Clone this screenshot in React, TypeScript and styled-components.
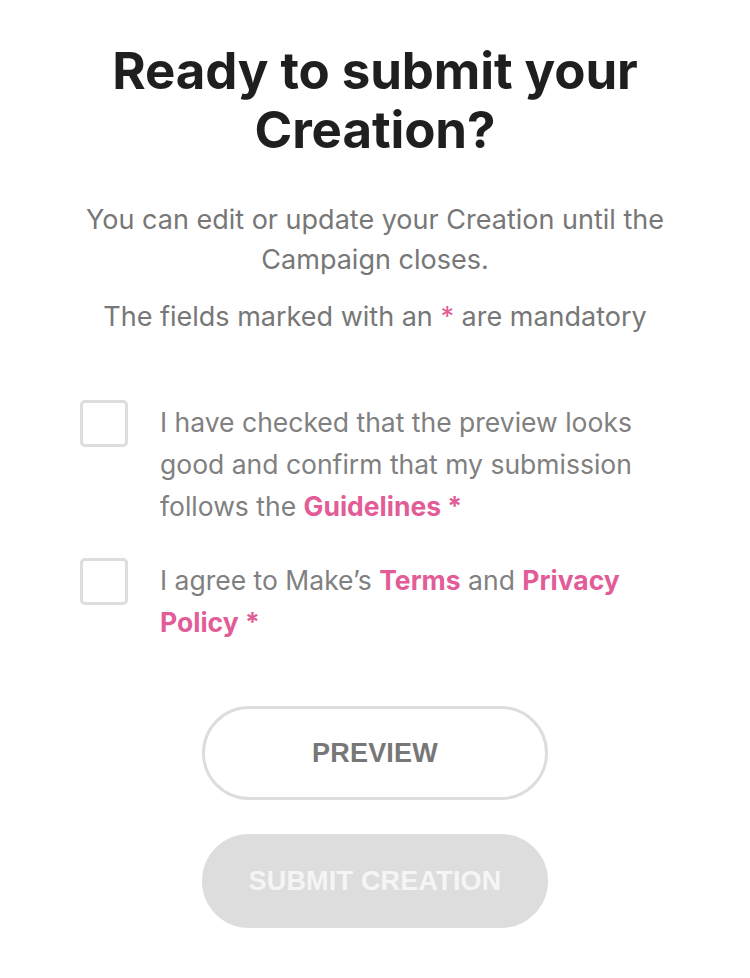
import styled, { createGlobalStyle } from "styled-components";

const GlobalStyle = createGlobalStyle`
  html, body {
    margin: 0;
    padding: 0;
    background: #ffffff;
  }
  body {
    font-family: Inter, "Noto Sans", "Liberation Sans", sans-serif;
    -webkit-font-smoothing: antialiased;
  }
`;

const Page = styled.main`
  width: 750px;
  display: flex;
  flex-direction: column;
  align-items: center;
  padding: 41px 0 40px;
  box-sizing: border-box;
`;

const Title = styled.h1`
  margin: 0;
  width: 620px;
  text-align: center;
  font-size: 51px;
  line-height: 59px;
  font-weight: 700;
  color: #1f1f1f;
  letter-spacing: -0.1px;
`;

const Lead = styled.p`
  margin: 41px 0 0;
  width: 640px;
  text-align: center;
  font-size: 27px;
  line-height: 40px;
  color: #777777;
`;

const Note = styled(Lead)`
  margin-top: 17px;
`;

const Pink = styled.span<{ $bold?: boolean }>`
  color: #e25d98;
  font-weight: ${(p) => (p.$bold ? 700 : 400)};
`;

const Checks = styled.div`
  width: 590px;
  margin-top: 63px;
  display: flex;
  flex-direction: column;
  gap: 31px;
`;

const CheckRow = styled.label`
  display: flex;
  align-items: flex-start;
  gap: 32px;
  cursor: pointer;
`;

const Box = styled.span`
  flex: none;
  width: 48px;
  height: 47px;
  box-sizing: border-box;
  border: 3px solid #dddddd;
  border-radius: 5px;
`;

const CheckText = styled.span`
  font-size: 26.5px;
  line-height: 42px;
  color: #808080;
  margin-top: 1px;
`;

const Buttons = styled.div`
  margin-top: 63px;
  display: flex;
  flex-direction: column;
  gap: 34px;
`;

const Button = styled.button<{ $filled?: boolean }>`
  width: 346px;
  height: 94px;
  box-sizing: border-box;
  border-radius: 47px;
  border: 3px solid #dddddd;
  background: ${(p) => (p.$filled ? "#dddddd" : "#ffffff")};
  color: ${(p) => (p.$filled ? "#f5f5f5" : "#777777")};
  font-family: "Liberation Sans", Arial, sans-serif;
  font-weight: 700;
  font-size: 27px;
  letter-spacing: 0.2px;
  text-transform: uppercase;
  cursor: pointer;
`;

export default function App() {
  return (
    <>
      <GlobalStyle />
      <Page>
        <Title>Ready to submit your Creation?</Title>
        <Lead>You can edit or update your Creation until the Campaign closes.</Lead>
        <Note>
          The fields marked with an <Pink>*</Pink> are mandatory
        </Note>
        <Checks>
          <CheckRow>
            <Box />
            <CheckText>
              I have checked that the preview looks good and confirm that my submission follows the{" "}
              <Pink $bold>Guidelines *</Pink>
            </CheckText>
          </CheckRow>
          <CheckRow>
            <Box />
            <CheckText>
              I agree to Make’s <Pink $bold>Terms</Pink> and <Pink $bold>Privacy Policy *</Pink>
            </CheckText>
          </CheckRow>
        </Checks>
        <Buttons>
          <Button>Preview</Button>
          <Button $filled disabled>
            Submit Creation
          </Button>
        </Buttons>
      </Page>
    </>
  );
}
